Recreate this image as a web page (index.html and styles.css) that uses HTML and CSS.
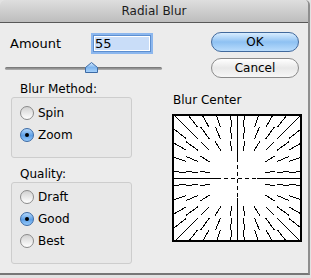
FILE: index.html
```html
<!DOCTYPE html>
<html lang="en">
<head>
  <meta charset="UTF-8">
  <title>Radial Blur</title>
  <link rel="stylesheet" href="styles.css">
</head>
<body>
<div class="window">
  <div class="titlebar">Radial Blur</div>

  <div class="content">
    <div class="left">
      <div class="amountRow">
        <label for="amount">Amount</label>
        <input type="text" id="amount" value="55">
      </div>

      <div class="slider">
        <div class="track"></div>
        <svg class="thumb" width="13" height="11" viewBox="0 0 13 11">
          <defs>
            <linearGradient id="thumbFill" x1="0" y1="0" x2="0" y2="1">
              <stop offset="0" stop-color="#d6ebff"/>
              <stop offset="0.5" stop-color="#7fb6ef"/>
              <stop offset="1" stop-color="#a9d3fb"/>
            </linearGradient>
          </defs>
          <path d="M6.5 0.5 L12.5 5.5 V10.5 H0.5 V5.5 Z" fill="url(#thumbFill)" stroke="#3c6aa5"/>
        </svg>
      </div>

      <div class="groupTitle">Blur Method:</div>
      <div class="group">
        <div class="radioRow"><span class="radio"></span>Spin</div>
        <div class="radioRow"><span class="radio on"></span>Zoom</div>
      </div>

      <div class="groupTitle">Quality:</div>
      <div class="group quality">
        <div class="radioRow"><span class="radio"></span>Draft</div>
        <div class="radioRow"><span class="radio on"></span>Good</div>
        <div class="radioRow"><span class="radio"></span>Best</div>
      </div>
    </div>

    <div class="right">
      <button type="button" class="btn btnDefault">OK</button>
      <button type="button" class="btn">Cancel</button>

      <div class="centerTitle">Blur Center</div>
      <svg class="centerBox" width="130" height="128" viewBox="0 0 130 128">
        <rect x="0" y="0" width="130" height="128" fill="#fff"/>
        <path id="rays" d="" stroke="#000" stroke-width="1" fill="none" shape-rendering="crispEdges"/>
        <path d="M65.5 0V44M65.5 84V128M0 64.5H45M85 64.5H130" stroke="#000" stroke-width="1"/>
        <path d="M65.5 44V84M45 64.5H85" stroke="#000" stroke-width="1" stroke-dasharray="4 3"/>
        <rect x="1" y="1" width="128" height="126" fill="none" stroke="#000" stroke-width="2"/>
      </svg>
    </div>
  </div>
</div>

<script>
  // zoom preview: a grid of streaks, each pointing at the centre
  const cx = 65.5, cy = 64.5;
  const step = 13;
  let d = '';
  for (let gx = -4.5; gx <= 4.5; gx++) {
    for (let gy = -4.5; gy <= 4.5; gy++) {
      const x = gx * step, y = gy * step;
      if (Math.max(Math.abs(x), Math.abs(y)) < 25) continue;
      const r = Math.sqrt(x * x + y * y);
      const half = (2 + 0.22 * r) / 2;
      const ux = x / r, uy = y / r;
      d += 'M' + (cx + x - ux * half).toFixed(1) + ' ' + (cy + y - uy * half).toFixed(1) +
        'L' + (cx + x + ux * half).toFixed(1) + ' ' + (cy + y + uy * half).toFixed(1);
    }
  }
  document.getElementById('rays').setAttribute('d', d);
</script>
</body>
</html>
```

FILE: styles.css
```css
body {
  margin: 0;
  background: #e2e2e2;
  font-family: "DejaVu Sans", sans-serif;
  font-size: 12px;
  color: #000;
}

.window {
  width: 308px;
  height: 273px;
  background: #ececec;
  border-right: 2px solid #8e8e8e;
  border-bottom: 2px solid #777;
  border-radius: 5px 5px 0 0;
  overflow: hidden;
}

.titlebar {
  height: 22px;
  line-height: 22px;
  text-align: center;
  color: #1c1c1c;
  background: linear-gradient(#dedede, #bdbdbd);
  border-bottom: 1px solid #585858;
}

.content {
  display: flex;
}

.left {
  width: 165px;
  padding: 12px 0 0 5px;
}

.amountRow {
  display: flex;
  align-items: center;
  padding-left: 5px;
}

.amountRow label {
  width: 83px;
  font-size: 13px;
}

.amountRow input {
  width: 58px;
  height: 17px;
  box-sizing: border-box;
  margin: 0;
  padding: 0 1px;
  border: 1px solid #5d8fd0;
  background: #c9ddf8;
  box-shadow: 0 0 0 2px #8cb7ee, inset 0 0 0 1px #fff;
  font-family: "DejaVu Sans", sans-serif;
  font-size: 13px;
  outline: none;
}

.slider {
  position: relative;
  width: 157px;
  height: 12px;
  margin-top: 10px;
}

.track {
  position: absolute;
  left: 0;
  right: 0;
  top: 5px;
  height: 3px;
  border-radius: 2px;
  background: linear-gradient(#6f6f6f, #b5b5b5);
}

.thumb {
  position: absolute;
  left: 80px;
  top: 0;
}

.groupTitle {
  line-height: 15px;
  margin-top: 8px;
  padding-left: 15px;
}

.group {
  box-sizing: border-box;
  width: 121px;
  height: 61px;
  margin-left: 6px;
  padding-top: 4px;
  border: 1px solid #cdcdcd;
  border-radius: 3px;
  background: #e8e8e8;
}

.group + .groupTitle {
  margin-top: 9px;
}

.quality {
  height: 82px;
  padding-top: 3px;
}

.radioRow {
  display: flex;
  align-items: center;
  height: 22px;
  padding-left: 8px;
}

.radio {
  position: relative;
  width: 14px;
  height: 14px;
  box-sizing: border-box;
  margin-right: 4px;
  border: 1px solid #8a8a8a;
  border-radius: 50%;
  background: linear-gradient(#d2d2d2, #fff);
}

.radio.on {
  border-color: #3c6aa5;
  background: linear-gradient(#b3d7fa, #5d9fe6 55%, #95c9fa);
}

.radio.on::after {
  content: "";
  position: absolute;
  left: 4px;
  top: 4px;
  width: 4px;
  height: 4px;
  border-radius: 50%;
  background: #000;
}

.right {
  flex: 1;
  padding-top: 9px;
}

.btn {
  display: block;
  width: 88px;
  height: 20px;
  margin: 0 0 6px 41px;
  padding: 0;
  border: 1px solid #8a8a8a;
  border-radius: 10px;
  background: linear-gradient(#fff, #e8e8e8 50%, #f7f7f7);
  font-family: "DejaVu Sans", sans-serif;
  font-size: 12px;
  color: #000;
}

.btnDefault {
  border-color: #41699c;
  background: linear-gradient(#d9edff, #8ec1f2 50%, #b9dcfc);
}

.centerTitle {
  line-height: 15px;
  margin-top: 15px;
  padding-left: 3px;
}

.centerBox {
  display: block;
  margin: 6px 0 0 2px;
}
```
